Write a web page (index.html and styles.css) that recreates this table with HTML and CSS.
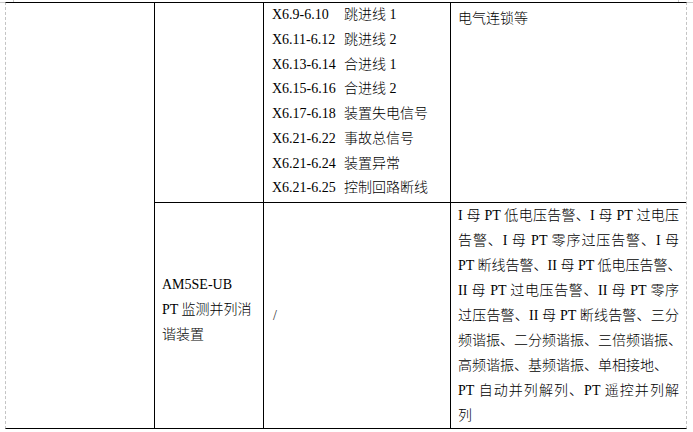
FILE: index.html
```html
<!DOCTYPE html>
<html lang="zh-CN">
<head>
<meta charset="utf-8">
<title>表格</title>
<link rel="stylesheet" href="styles.css">
</head>
<body>
<div class="page">
  <span class="mark mark-tl-h"></span>
  <span class="mark mark-tl-v"></span>
  <span class="mark mark-tr-h"></span>
  <span class="mark mark-tr-v"></span>
  <div class="sheet">
    <div class="cell c1"></div>
    <div class="cell c2 r1"></div>
    <div class="cell c3 r1">
      <div class="io"><span>X6.9-6.10</span><span>跳进线 1</span></div>
      <div class="io"><span>X6.11-6.12</span><span>跳进线 2</span></div>
      <div class="io"><span>X6.13-6.14</span><span>合进线 1</span></div>
      <div class="io"><span>X6.15-6.16</span><span>合进线 2</span></div>
      <div class="io"><span>X6.17-6.18</span><span>装置失电信号</span></div>
      <div class="io"><span>X6.21-6.22</span><span>事故总信号</span></div>
      <div class="io"><span>X6.21-6.24</span><span>装置异常</span></div>
      <div class="io"><span>X6.21-6.25</span><span>控制回路断线</span></div>
    </div>
    <div class="cell c4 r1"><div class="note">电气连锁等</div></div>

    <div class="cell c2 r2 dev">AM5SE-UB<br>PT 监测并列消<br>谐装置</div>
    <div class="cell c3 r2 slash">/</div>
    <div class="cell c4 r2">
      <div class="ln j">I 母 PT 低电压告警、I 母 PT 过电压</div>
      <div class="ln j">告警、I 母 PT 零序过压告警、I 母</div>
      <div class="ln j">PT 断线告警、II 母 PT 低电压告警、</div>
      <div class="ln j">II 母 PT 过电压告警、II 母 PT 零序</div>
      <div class="ln j">过压告警、II 母 PT 断线告警、三分</div>
      <div class="ln">频谐振、二分频谐振、三倍频谐振、</div>
      <div class="ln">高频谐振、基频谐振、单相接地、</div>
      <div class="ln j">PT 自动并列解列、PT 遥控并列解</div>
      <div class="ln">列</div>
    </div>
  </div>
</div>
</body>
</html>
```

FILE: styles.css
```css
html, body {
  margin: 0;
  padding: 0;
  background: #ffffff;
}

body {
  font-family: "Liberation Serif", "Noto Sans CJK SC", serif;
  font-size: 14px;
  font-weight: 300;
  color: #000000;
}

.page {
  position: relative;
  width: 693px;
  height: 432px;
  padding: 2px 0 0 5px;
  box-sizing: border-box;
}

.mark {
  position: absolute;
  background: #c8c8c8;
}
.mark-tl-h { left: 0; top: 2px; width: 5px; height: 1px; }
.mark-tl-v { left: 13px; top: 0; width: 1px; height: 2px; }
.mark-tr-h { left: 687px; top: 2px; width: 6px; height: 1px; }
.mark-tr-v { left: 678px; top: 0; width: 1px; height: 2px; }

.sheet {
  display: grid;
  grid-template-columns: 149px 109px 187px 235px;
  grid-template-rows: 200px 225px;
  width: 682px;
  box-sizing: border-box;
  border-top: 1px solid #000;
  border-bottom: 1px solid #000;
  border-left: 1px dashed #c4c4c4;
  border-right: 1px dashed #c4c4c4;
}

.cell {
  box-sizing: border-box;
  min-width: 0;
}

.c1 {
  grid-row: 1 / 3;
  grid-column: 1;
  border-right: 1px solid #000;
}
.c2 { grid-column: 2; border-right: 1px solid #000; }
.c3 { grid-column: 3; border-right: 1px solid #000; }
.c4 { grid-column: 4; }
.r1 { grid-row: 1; border-bottom: 1px solid #000; }
.r2 { grid-row: 2; }

.c3.r1 {
  padding-left: 8px;
  line-height: 24.75px;
}

.io {
  display: grid;
  grid-template-columns: 72px auto;
  white-space: nowrap;
}

.note {
  padding: 3px 0 0 7px;
  line-height: 25px;
}

.dev {
  padding: 69px 0 0 7px;
  line-height: 25px;
}

.slash {
  display: flex;
  align-items: center;
  padding-left: 9px;
  color: #333;
}

.c4.r2 {
  padding: 0 7px 0 7px;
  line-height: 25px;
}

.ln {
  white-space: nowrap;
}

.ln.j {
  text-align: justify;
  text-align-last: justify;
}
```
